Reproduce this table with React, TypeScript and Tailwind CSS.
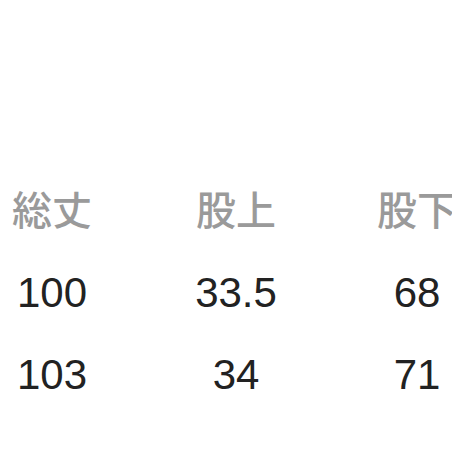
export default function App() {
  const headers = ["総丈", "股上", "股下"]
  const rows = [
    ["100", "33.5", "68"],
    ["103", "34", "71"],
  ]

  return (
    <div className="w-[452px] h-[452px] overflow-hidden bg-white pt-[188px]">
      <div
        className="grid grid-cols-[104px_264px_98px] text-center whitespace-nowrap font-medium text-[40px] leading-none text-[#9a9a9a]"
        style={{ fontFamily: '"Noto Sans CJK JP", "Noto Sans", sans-serif' }}
      >
        {headers.map((h) => (
          <div key={h}>{h}</div>
        ))}
      </div>

      <div
        className="text-[42px] leading-none text-[#222222]"
        style={{ fontFamily: '"Liberation Sans", Arial, sans-serif' }}
      >
        {rows.map((row, i) => (
          <div
            key={i}
            className={`grid grid-cols-[104px_264px_98px] text-center whitespace-nowrap ${i === 0 ? "mt-[44px]" : "mt-[40px]"}`}
          >
            {row.map((v, j) => (
              <div key={j}>{v}</div>
            ))}
          </div>
        ))}
      </div>
    </div>
  )
}
